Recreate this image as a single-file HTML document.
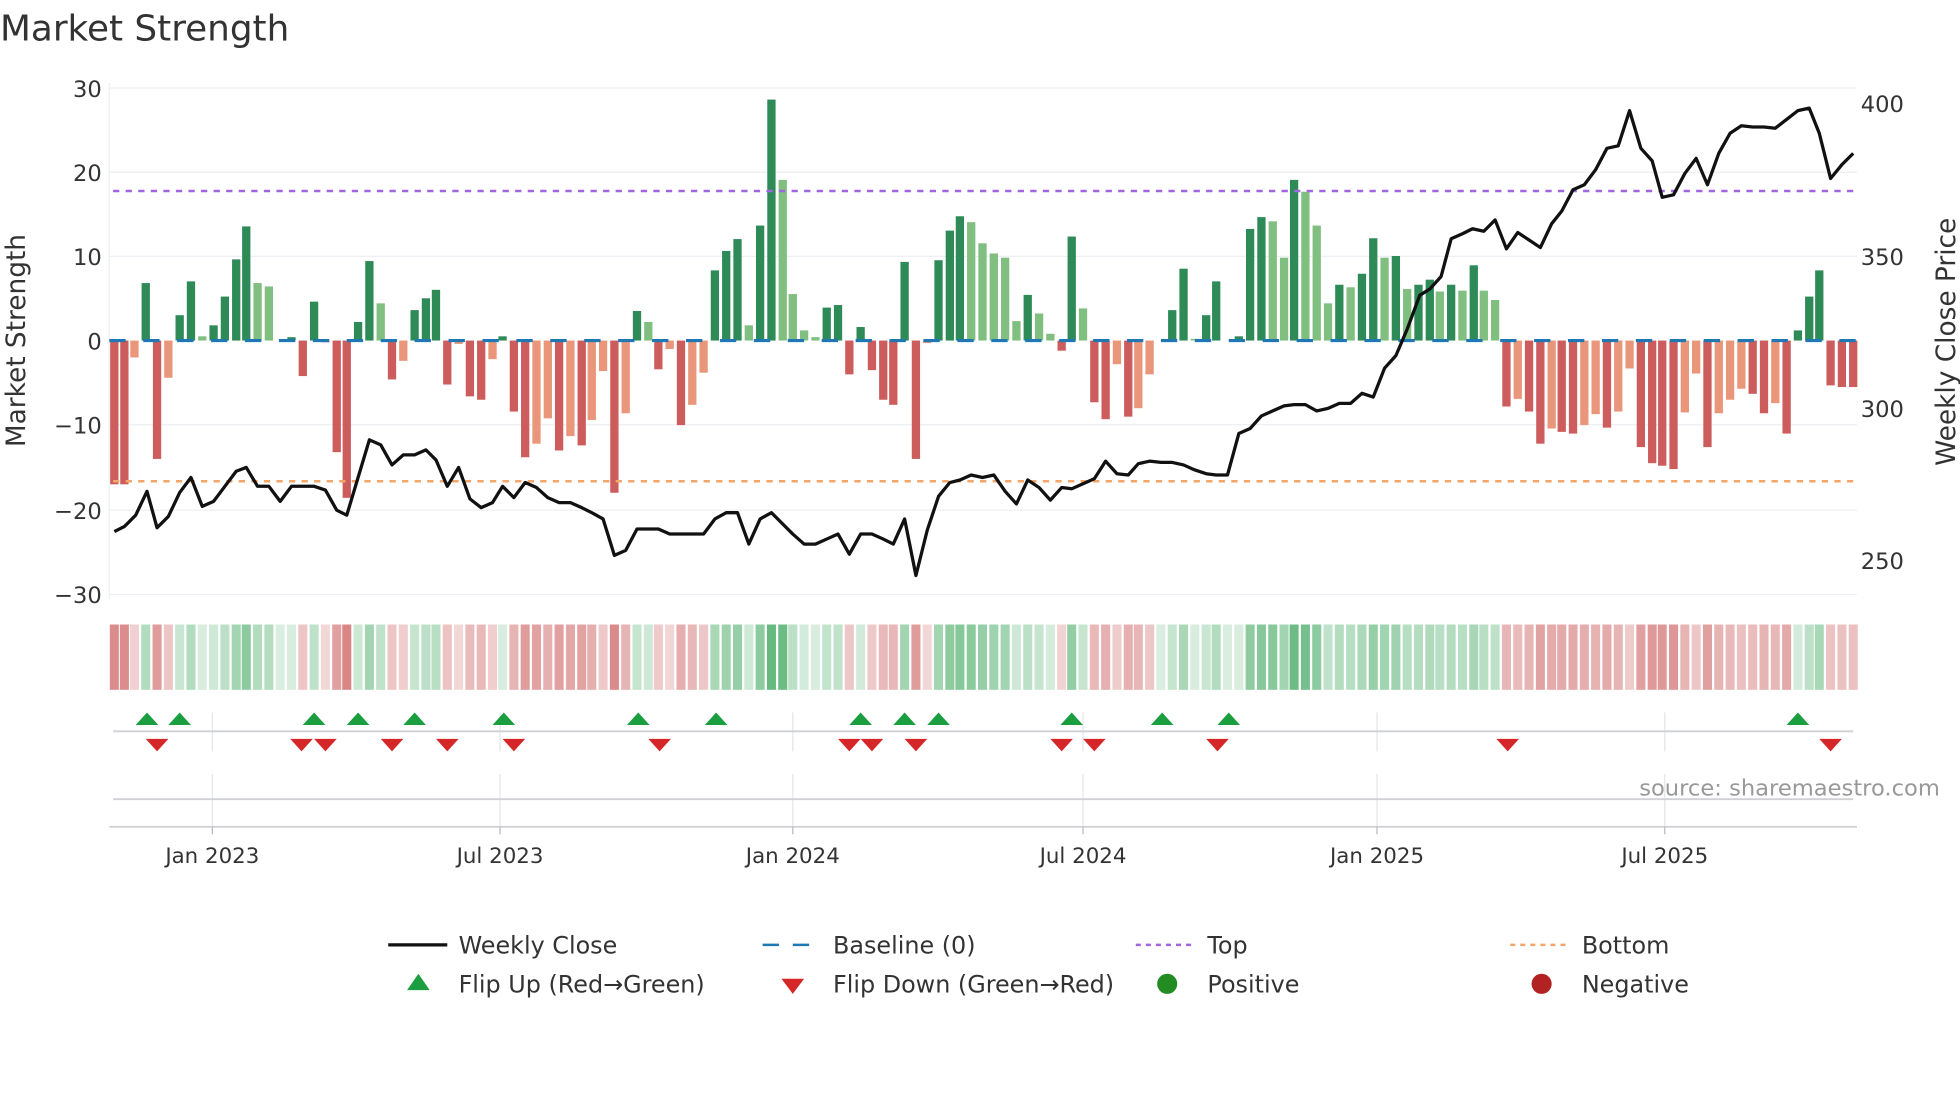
<!DOCTYPE html>
<html><head><meta charset="utf-8"><style>
html,body{margin:0;padding:0;background:#fff;}
svg{display:block;}
text{font-family:"DejaVu Sans","Liberation Sans",sans-serif;fill:#333;}
</style></head><body>
<svg id="s" width="1960" height="1102" viewBox="0 0 1560 877" xmlns="http://www.w3.org/2000/svg">
<rect width="1560" height="877" fill="#fff"/>
<text x="0" y="32" font-size="28.5" fill="#333">Market Strength</text>
<g id="grid" stroke="#eceff3" stroke-width="1">
<line x1="87" y1="70" x2="1478" y2="70"/><line x1="87" y1="137" x2="1478" y2="137"/><line x1="87" y1="204" x2="1478" y2="204"/><line x1="87" y1="338" x2="1478" y2="338"/><line x1="87" y1="406" x2="1478" y2="406"/><line x1="87" y1="473" x2="1478" y2="473"/>
<line x1="87" y1="66" x2="87" y2="477"/>
</g>
<g font-size="18" text-anchor="end">
<text x="81" y="77">30</text><text x="81" y="144">20</text><text x="81" y="211">10</text><text x="81" y="278">0</text><text x="81" y="345">−10</text><text x="81" y="413">−20</text><text x="81" y="480">−30</text>
</g>
<g font-size="18">
<text x="1481" y="89">400</text><text x="1481" y="211">350</text><text x="1481" y="332">300</text><text x="1481" y="453">250</text>
</g>
<text transform="translate(20,271) rotate(-90)" font-size="21" text-anchor="middle">Market Strength</text>
<text transform="translate(1556,272) rotate(-90)" font-size="21" text-anchor="middle">Weekly Close Price</text>
<g id="bars"></g>
<line x1="87" y1="271" x2="1478" y2="271" stroke="#1f77b4" stroke-width="2.5" stroke-dasharray="13,14"/>
<line x1="90" y1="152" x2="1478" y2="152" stroke="#a066e0" stroke-width="2" stroke-dasharray="5,5"/>
<line x1="90" y1="383" x2="1478" y2="383" stroke="#f2a66a" stroke-width="2" stroke-dasharray="5,5"/>
<polyline id="price" fill="none" stroke="#111" stroke-width="2.6" stroke-linejoin="round"/>
<g id="heat"></g>
<g stroke="#e4e6ea" stroke-width="1">
<line x1="169" y1="567" x2="169" y2="598"/><line x1="398" y1="567" x2="398" y2="598"/><line x1="631" y1="567" x2="631" y2="598"/><line x1="862" y1="567" x2="862" y2="598"/><line x1="1096" y1="567" x2="1096" y2="598"/><line x1="1325" y1="567" x2="1325" y2="598"/>
<line x1="169" y1="616" x2="169" y2="658"/><line x1="398" y1="616" x2="398" y2="658"/><line x1="631" y1="616" x2="631" y2="658"/><line x1="862" y1="616" x2="862" y2="658"/><line x1="1096" y1="616" x2="1096" y2="658"/><line x1="1325" y1="616" x2="1325" y2="658"/>
</g>
<line x1="90" y1="582" x2="1475" y2="582" stroke="#cfd1d5" stroke-width="1.5"/>
<line x1="90" y1="636" x2="1475" y2="636" stroke="#cfd1d5" stroke-width="1.5"/>
<line x1="87" y1="658" x2="1478" y2="658" stroke="#cfd1d5" stroke-width="1.5"/>
<g stroke="#bbb" stroke-width="1">
<line x1="169" y1="658" x2="169" y2="664"/><line x1="398" y1="658" x2="398" y2="664"/><line x1="631" y1="658" x2="631" y2="664"/><line x1="862" y1="658" x2="862" y2="664"/><line x1="1096" y1="658" x2="1096" y2="664"/><line x1="1325" y1="658" x2="1325" y2="664"/>
</g>
<g id="marks"></g>
<text x="1544" y="633" font-size="18" fill="#999" text-anchor="end" style="fill:#999">source: sharemaestro.com</text>
<g font-size="17" text-anchor="middle">
<text x="169" y="687">Jan 2023</text><text x="398" y="687">Jul 2023</text><text x="631" y="687">Jan 2024</text><text x="862" y="687">Jul 2024</text><text x="1096" y="687">Jan 2025</text><text x="1325" y="687">Jul 2025</text>
</g>
<g font-size="19">
<line x1="309" y1="752" x2="356" y2="752" stroke="#111" stroke-width="2.6"/>
<text x="365" y="759">Weekly Close</text>
<line x1="607" y1="752" x2="650" y2="752" stroke="#1f77b4" stroke-width="2" stroke-dasharray="13,11"/>
<text x="663" y="759">Baseline (0)</text>
<line x1="904" y1="752" x2="948" y2="752" stroke="#a066e0" stroke-width="2" stroke-dasharray="4,4"/>
<text x="961" y="759">Top</text>
<line x1="1202" y1="752" x2="1246" y2="752" stroke="#f2a66a" stroke-width="2" stroke-dasharray="4,4"/>
<text x="1259" y="759">Bottom</text>
<polygon points="324,788 342,788 333,775" fill="#1a9e3f"/>
<text x="365" y="790">Flip Up (Red→Green)</text>
<polygon points="622,779 640,779 631,791" fill="#d62728"/>
<text x="663" y="790">Flip Down (Green→Red)</text>
<circle cx="929" cy="783" r="8" fill="#228b22"/>
<text x="961" y="790">Positive</text>
<circle cx="1227" cy="783" r="8" fill="#b22222"/>
<text x="1259" y="790">Negative</text>
</g>
</svg>
<script>
var bx=[91,-17,99,-17,107,-2,116,6.8,125,-14,134,-4.4,143,3,152,7,161,0.5,170,1.8,179,5.2,188,9.6,196,13.5,205,6.8,214,6.4,223,0,232,0.4,241,-4.2,250,4.6,259,-0.2,268,-13.2,276,-18.6,285,2.2,294,9.4,303,4.4,312,-4.6,321,-2.4,330,3.6,339,5,347,6,356,-5.2,365,-0.4,374,-6.6,383,-7,392,-2.2,400,0.5,409,-8.4,418,-13.8,427,-12.2,436,-9.2,445,-13,454,-11.3,463,-12.4,471,-9.4,480,-3.6,489,-18,498,-8.6,507,3.5,516,2.2,524,-3.4,533,-1,542,-10,551,-7.6,560,-3.8,569,8.3,578,10.6,587,12,596,1.8,605,13.6,614,28.5,623,19,631,5.5,640,1.2,649,0.4,658,3.9,667,4.2,676,-4,685,1.6,694,-3.5,703,-7,711,-7.6,720,9.3,729,-14,738,-0.3,747,9.5,756,13,764,14.7,773,14,782,11.5,791,10.3,800,9.8,809,2.3,818,5.4,827,3.2,836,0.8,845,-1.2,853,12.3,862,3.8,871,-7.3,880,-9.3,889,-2.8,898,-9,906,-8,915,-4,924,0,933,3.6,942,8.5,951,0.2,960,3,968,7,977,0,986,0.5,995,13.2,1004,14.6,1013,14.1,1022,9.8,1030,19,1039,17.6,1048,13.6,1057,4.4,1066,6.6,1075,6.3,1084,7.9,1093,12.1,1102,9.8,1111,10,1120,6.1,1129,6.6,1138,7.2,1146,5.8,1155,6.6,1164,5.9,1173,8.9,1181,5.9,1190,4.8,1199,-7.8,1208,-6.9,1217,-8.4,1226,-12.2,1235,-10.4,1243,-10.8,1252,-11,1261,-10,1270,-8.7,1279,-10.3,1288,-8.4,1297,-3.3,1306,-12.6,1315,-14.5,1323,-14.8,1332,-15.2,1341,-8.5,1350,-3.9,1359,-12.6,1368,-8.6,1377,-7,1386,-5.7,1395,-6.3,1404,-8.6,1413,-7.4,1422,-11,1431,1.2,1440,5.2,1448,8.3,1457,-5.3,1466,-5.5,1475,-5.5];
var NS="http://www.w3.org/2000/svg";
function el(t,a,p){var e=document.createElementNS(NS,t);for(var k in a)e.setAttribute(k,a[k]);p.appendChild(e);return e;}
var bars=document.getElementById('bars'),heat=document.getElementById('heat');
var prev=0;
for(var i=0;i<bx.length;i+=2){
 var x=bx[i],v=bx[i+1],h=Math.abs(v)*6.73,c;
 if(v>=0){c=(prev>0&&v<prev)?'#80bf80':'#2e8b57';}
 else{c=(prev<0&&v>prev)?'#e9967a':'#cd5c5c';}
 if(h>0.3) el('rect',{x:x-3.3,y:v>=0?271-h:271,width:6.6,height:h,fill:c},bars);
 var m=Math.min(1,Math.abs(v)/20),col;
 if(v>=0){col='rgba(46,160,80,'+(0.18+0.55*m).toFixed(2)+')';}
 else{col='rgba(200,80,80,'+(0.22+0.5*m).toFixed(2)+')';}
 el('rect',{x:x-3.6,y:497,width:7.2,height:52,fill:col},heat);
 prev=v;
}
var pts=[91,423,99,419,108,410,117,391,125,420,134,411,143,392,152,380,161,403,170,399,179,387,188,375,196,372,205,387,214,387,223,399,232,387,241,387,250,387,259,390,268,406,276,410,285,380,294,350,303,354,312,370,321,362,330,362,339,358,347,366,356,387,365,372,374,397,383,404,392,400,400,387,409,396,418,384,427,388,436,396,445,400,454,400,463,404,471,408,480,413,489,442,498,438,507,421,516,421,524,421,533,425,542,425,551,425,560,425,569,413,578,408,587,408,596,433,605,413,614,408,623,417,631,425,640,433,649,433,658,429,667,425,676,441,685,425,694,425,703,429,711,433,720,413,729,458,738,422,747,395,756,384,764,382,773,378,782,380,791,378,800,391,809,401,818,382,827,388,836,398,845,388,853,389,862,385,871,381,880,367,889,377,898,378,906,369,915,367,924,368,933,368,942,370,951,374,960,377,968,378,977,378,986,345,995,341,1004,331,1013,327,1022,323,1030,322,1039,322,1048,327,1057,325,1066,321,1075,321,1084,313,1093,316,1102,293,1111,283,1120,262,1130,235,1138,230,1147,220,1155,190,1164,186,1172,182,1181,184,1190,175,1199,198,1208,185,1217,191,1226,197,1235,178,1243,168,1252,151,1261,147,1270,135,1279,118,1288,116,1297,88,1306,118,1315,128,1323,157,1332,155,1341,138,1350,126,1359,147,1368,122,1377,106,1386,100,1395,101,1404,101,1413,102,1422,95,1431,88,1440,86,1448,106,1457,142,1466,131,1475,122];
var s='';for(var j=0;j<pts.length;j+=2)s+=pts[j]+','+pts[j+1]+' ';
document.getElementById('price').setAttribute('points',s);
var marks=document.getElementById('marks');
[117,143,250,285,330,401,508,570,685,720,747,853,925,978,1431].forEach(function(x){el('polygon',{points:(x-9)+',577 '+(x+9)+',577 '+x+',567',fill:'#1a9e3f'},marks);});
[125,240,259,312,356,409,525,676,694,729,845,871,969,1200,1457].forEach(function(x){el('polygon',{points:(x-9)+',588 '+(x+9)+',588 '+x+',598',fill:'#d62728'},marks);});
</script>
</body></html>
